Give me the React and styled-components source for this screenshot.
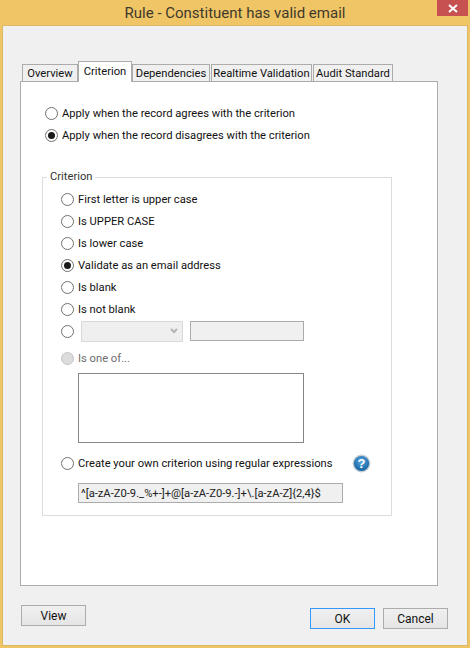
import React from "react";
import styled, { createGlobalStyle } from "styled-components";

const GlobalStyle = createGlobalStyle`
html, body {
  margin: 0;
  padding: 0;
  background: #f0c566;
}
* {
  box-sizing: border-box;
}
`;

const Window = styled.div`
  width: 470px;
  height: 648px;
  display: flex;
  flex-direction: column;
  background: #f0c566;
  font-family: Roboto, "Liberation Sans", Arial, sans-serif;
  font-size: 11.2px;
  color: #111;
`;

const TitleBar = styled.div`
  height: 25px;
  flex: none;
  position: relative;
  display: flex;
  justify-content: center;
  align-items: center;
  font-size: 15px;
  color: #3f3a2c;
`;

const CloseButton = styled.div`
  position: absolute;
  top: 0;
  right: 2px;
  width: 31px;
  height: 16px;
  background: #c75050;
  display: flex;
  align-items: center;
  justify-content: center;
`;

const Body = styled.div`
  flex: 1;
  margin: 0 2px 2px;
  border: 1px solid #dcb765;
  background: #f0f0f0;
  padding: 35px 0 0 17px;
  display: flex;
  flex-direction: column;
`;

const TabRow = styled.div`
  display: flex;
  align-items: flex-end;
  gap: 1px;
  padding-left: 2px;
  height: 20px;
`;

const Tab = styled.div`
  width: ${(p) => p.$width}px;
  height: ${(p) => (p.$active ? 21 : 18)}px;
  margin-left: ${(p) => (p.$active ? -1 : 0)}px;
  margin-right: ${(p) => (p.$active ? -1 : 0)}px;
  margin-bottom: -1px;
  background: ${(p) => (p.$active ? "#fff" : "#f0f0f0")};
  border: 1px solid #acacac;
  border-bottom: ${(p) => (p.$active ? "none" : "1px solid #acacac")};
  display: flex;
  align-items: center;
  justify-content: center;
  position: relative;
  z-index: ${(p) => (p.$active ? 2 : 0)};
  white-space: nowrap;
  padding-bottom: ${(p) => (p.$active ? 2 : 0)}px;
`;

const Panel = styled.div`
  width: 418px;
  height: 505px;
  background: #fff;
  border: 1px solid #acacac;
  padding: 20px 0 0 21px;
  position: relative;
  z-index: 1;
`;

const ApplyGroup = styled.div`
  padding-left: 3px;
`;

const Row = styled.div`
  height: 22px;
  display: flex;
  align-items: center;
  margin-top: ${(p) => p.$top || 0}px;
  color: ${(p) => (p.$disabled ? "#6d6d6d" : "inherit")};
`;

const Radio = styled.span`
  width: 13px;
  height: 13px;
  flex: none;
  margin-right: ${(p) => p.$gap || 4}px;
  border-radius: 50%;
  border: 1px solid ${(p) => (p.$disabled ? "#c4c4c4" : "#6f6f6f")};
  background: ${(p) => (p.$disabled ? "#dcdcdc" : "#fff")};
  display: flex;
  align-items: center;
  justify-content: center;

  &::after {
    content: "";
    width: 7px;
    height: 7px;
    border-radius: 50%;
    background: #1a1a1a;
    display: ${(p) => (p.$checked ? "block" : "none")};
  }
`;

const GroupBox = styled.fieldset`
  width: 350px;
  margin: 23px 0 0;
  padding: 3px 0 12px 18px;
  border: 1px solid #dcdcdc;
  min-width: 0;
`;

const GroupTitle = styled.legend`
  margin-left: -14px;
  padding: 0 3px;
  height: 16px;
  line-height: 16px;
  color: #333;
`;

const ComboBox = styled.div`
  width: 102px;
  height: 21px;
  background: #efefef;
  border: 1px solid #d9d9d9;
  display: flex;
  align-items: center;
  justify-content: flex-end;
  padding-right: 4px;
`;

const DisabledInput = styled.div`
  width: 114px;
  height: 20px;
  margin-left: 7px;
  background: #f0f0f0;
  border: 1px solid #ababab;
`;

const ListBox = styled.div`
  width: 226px;
  height: 70px;
  margin: 4px 0 0 17px;
  background: #fff;
  border: 1px solid #84868c;
`;

const RegexLabel = styled.span`
  width: 274px;
  white-space: nowrap;
`;

const RegexField = styled.div`
  width: 265px;
  height: 20px;
  margin: 9px 0 0 17px;
  padding-left: 2px;
  background: #f0f0f0;
  border: 1px solid #ababab;
  display: flex;
  align-items: center;
  white-space: nowrap;
  color: #222;
`;

const Footer = styled.div`
  display: flex;
  align-items: flex-start;
  padding: 19px 19px 0 1px;
`;

const Button = styled.button`
  width: 65px;
  height: 21px;
  margin-top: ${(p) => p.$top || 0}px;
  margin-left: ${(p) => p.$left || 0}px;
  padding: 0;
  border: 1px solid ${(p) => (p.$primary ? "#3399ff" : "#acacac")};
  background: linear-gradient(#f0f0f0, #e5e5e5);
  font: inherit;
  font-size: 12px;
  color: #111;
`;

const TABS = [
  { label: "Overview", width: 56 },
  { label: "Criterion", width: 54, active: true },
  { label: "Dependencies", width: 78 },
  { label: "Realtime Validation", width: 101 },
  { label: "Audit Standard", width: 80 },
];

const CRITERIA = [
  { label: "First letter is upper case" },
  { label: "Is UPPER CASE" },
  { label: "Is lower case" },
  { label: "Validate as an email address", checked: true },
  { label: "Is blank" },
  { label: "Is not blank" },
];

const HelpIcon = () => (
  <svg width="19" height="19" viewBox="0 0 19 19">
    <defs>
      <radialGradient id="helpFill" cx="50%" cy="35%" r="65%">
        <stop offset="0%" stopColor="#5aa7e0" />
        <stop offset="100%" stopColor="#12609f" />
      </radialGradient>
    </defs>
    <circle cx="9.5" cy="9.5" r="9" fill="#c4ced6" />
    <circle cx="9.5" cy="9.5" r="7.6" fill="url(#helpFill)" />
    <text
      x="9.5"
      y="14"
      textAnchor="middle"
      fontFamily="Liberation Sans, sans-serif"
      fontWeight="700"
      fontSize="13"
      fill="#fff"
    >
      ?
    </text>
  </svg>
);

const App = () => (
  <Window>
    <GlobalStyle />
    <TitleBar>
      Rule - Constituent has valid email
      <CloseButton>
        <svg width="10" height="9" viewBox="0 0 10 9">
          <path d="M1 1 L9 8 M9 1 L1 8" stroke="#fff" strokeWidth="2" />
        </svg>
      </CloseButton>
    </TitleBar>
    <Body>
      <TabRow>
        {TABS.map((tab) => (
          <Tab key={tab.label} $width={tab.width} $active={tab.active}>
            {tab.label}
          </Tab>
        ))}
      </TabRow>
      <Panel>
        <ApplyGroup>
          <Row>
            <Radio />
            Apply when the record agrees with the criterion
          </Row>
          <Row>
            <Radio $checked />
            Apply when the record disagrees with the criterion
          </Row>
        </ApplyGroup>
        <GroupBox>
          <GroupTitle>Criterion</GroupTitle>
          {CRITERIA.map((item) => (
            <Row key={item.label}>
              <Radio $checked={item.checked} />
              {item.label}
            </Row>
          ))}
          <Row>
            <Radio $gap={7} />
            <ComboBox>
              <svg width="8" height="6" viewBox="0 0 8 6">
                <path d="M1 1 L4 4 L7 1" fill="none" stroke="#b4b4b4" strokeWidth="2" />
              </svg>
            </ComboBox>
            <DisabledInput />
          </Row>
          <Row $top={5} $disabled>
            <Radio $disabled />
            Is one of...
          </Row>
          <ListBox />
          <Row $top={9}>
            <Radio />
            <RegexLabel>Create your own criterion using regular expressions</RegexLabel>
            <HelpIcon />
          </Row>
          <RegexField>^[a-zA-Z0-9._%+-]+@[a-zA-Z0-9.-]+\.[a-zA-Z]&#123;2,4&#125;$</RegexField>
        </GroupBox>
      </Panel>
      <Footer>
        <Button>View</Button>
        <Button $primary $top={3} $left={224}>OK</Button>
        <Button $top={3} $left={8}>Cancel</Button>
      </Footer>
    </Body>
  </Window>
);

export default App;
